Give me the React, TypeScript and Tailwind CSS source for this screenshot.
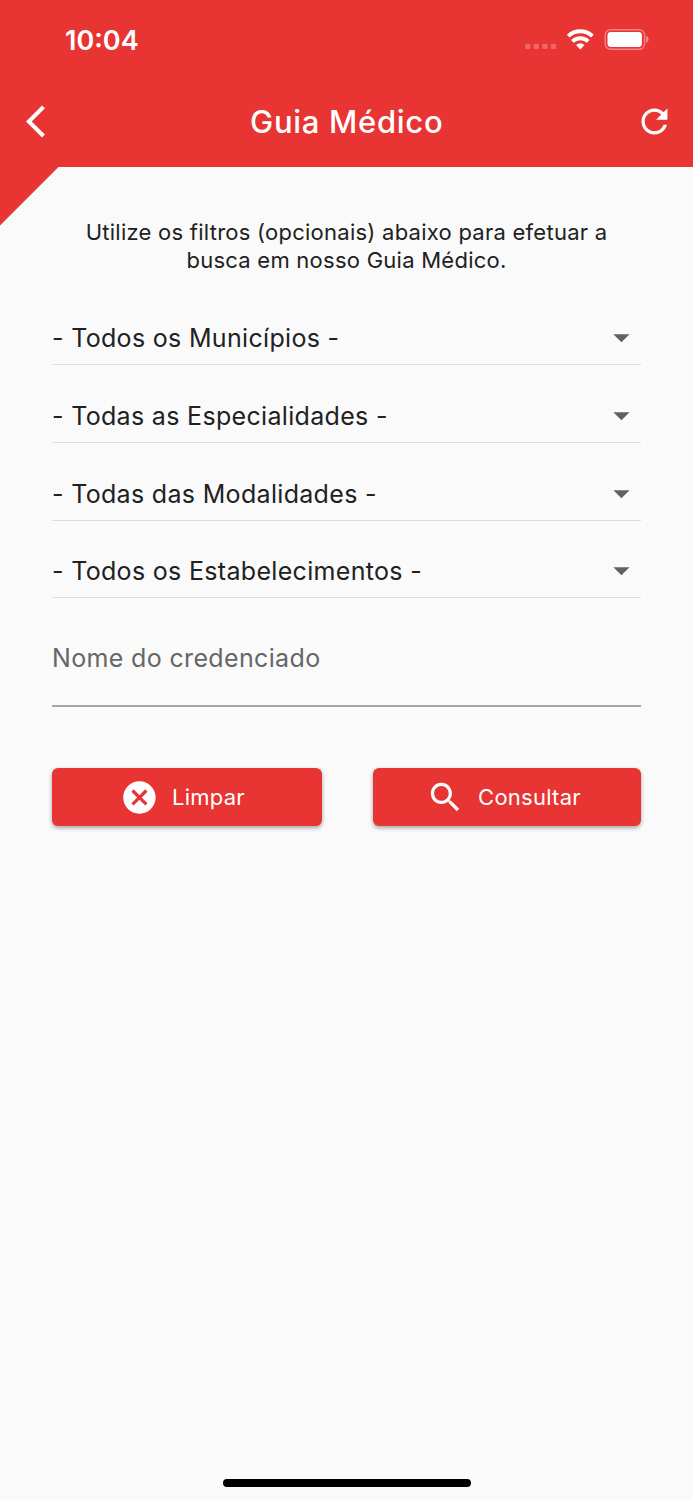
import React from 'react';

interface IconProps {
  d: string;
  className?: string;
}

const ICONS = {
  back: 'M11.67 3.87L9.9 2.1 0 12l9.9 9.9 1.77-1.77L3.54 12z',
  refresh:
    'M17.65 6.35C16.2 4.9 14.21 4 12 4c-4.42 0-7.99 3.58-7.99 8s3.57 8 7.99 8c3.73 0 6.84-2.55 7.73-6h-2.08c-.82 2.33-3.04 4-5.65 4-3.31 0-6-2.69-6-6s2.69-6 6-6c1.66 0 3.14.69 4.22 1.78L13 11h7V4l-2.35 2.35z',
  dropDown: 'M7 10l5 5 5-5z',
  cancel:
    'M12 2C6.47 2 2 6.47 2 12s4.47 10 10 10 10-4.47 10-10S17.53 2 12 2zm5 13.59L15.59 17 12 13.41 8.41 17 7 15.59 10.59 12 7 8.41 8.41 7 12 10.59 15.59 7 17 8.41 13.41 12 17 15.59z',
  search:
    'M15.5 14h-.79l-.28-.27C15.41 12.59 16 11.11 16 9.5 16 5.91 13.09 3 9.5 3S3 5.91 3 9.5 5.91 16 9.5 16c1.61 0 3.09-.59 4.23-1.57l.27.28v.79l5 4.99L20.49 19l-4.99-5zm-6 0C7.01 14 5 11.99 5 9.5S7.01 5 9.5 5 14 7.01 14 9.5 11.99 14 9.5 14z',
};

const Icon: React.FC<IconProps> = ({ d, className = '' }) => (
  <svg viewBox="0 0 24 24" fill="currentColor" className={`h-[38.9px] w-[38.9px] shrink-0 ${className}`}>
    <path d={d} />
  </svg>
);

const FILTERS = [
  '- Todos os Municípios -',
  '- Todas as Especialidades -',
  '- Todas das Modalidades -',
  '- Todos os Estabelecimentos -',
];

const StatusBar: React.FC = () => (
  <div className="flex h-[78px] items-center justify-between pl-[65px] pr-[44px]">
    <span className="pt-[2px] text-[27px] font-semibold leading-none">10:04</span>
    <svg viewBox="0 0 126 24" className="h-6 w-[126px]">
      {/* no signal */}
      <g fill="#fff" opacity="0.25">
        <rect x="2" y="16.7" width="5.4" height="5.4" rx="1.5" />
        <rect x="10.6" y="16.7" width="5.4" height="5.4" rx="1.5" />
        <rect x="19.2" y="16.7" width="5.4" height="5.4" rx="1.5" />
        <rect x="27.8" y="16.7" width="5.4" height="5.4" rx="1.5" />
      </g>
      {/* wifi */}
      <g fill="none" stroke="#fff" strokeWidth="3.9">
        <path d="M45.2 9.1a17.5 17.5 0 0 1 24.2 0" />
        <path d="M49.4 14.4a11.5 11.5 0 0 1 15.8 0" />
      </g>
      <path d="M57.3 22.4l-4.2-4.4a6.2 6.2 0 0 1 8.4 0z" fill="#fff" />
      {/* battery */}
      <rect x="82.2" y="2.7" width="39.4" height="19.6" rx="5.6" fill="none" stroke="#fff" strokeOpacity="0.4" strokeWidth="1.4" />
      <rect x="84.5" y="5.1" width="34.4" height="14.8" rx="3.4" fill="#fff" />
      <path d="M123.2 9.1c1.5.6 2.4 1.8 2.4 3.4s-.9 2.8-2.4 3.4z" fill="#fff" fillOpacity="0.45" />
    </svg>
  </div>
);

const App: React.FC = () => {
  return (
    <div className="flex h-[1500px] w-[693px] flex-col overflow-hidden bg-[#fafafa] font-['Inter','Liberation_Sans',sans-serif] text-[#212121]">
      <header className="relative h-[167px] shrink-0 bg-[#e83432] text-white">
        <StatusBar />
        <div className="flex h-[87px] items-center justify-between pl-[26px] pr-[19.5px]">
          <Icon d={ICONS.back} />
          <h1 className="pr-[6px] text-[31px] font-medium leading-none tracking-[0.7px]">Guia Médico</h1>
          <Icon d={ICONS.refresh} />
        </div>
        {/* corner fold under the bar */}
        <svg viewBox="0 0 59 59" className="absolute left-0 top-full h-[59px] w-[59px]">
          <path d="M0 0h58.5L0 58.5z" fill="#e83432" />
        </svg>
      </header>

      <main className="flex grow flex-col px-[52px] pt-[52px]">
        <p className="text-center text-[22px] leading-[27.5px] tracking-[0.25px]">
          Utilize os filtros (opcionais) abaixo para efetuar a
          <br />
          busca em nosso Guia Médico.
        </p>

        <div className="mt-[13px]">
          {FILTERS.map((label) => (
            <div
              key={label}
              className="flex h-[77.75px] items-end border-b border-[#dedede] pb-[6px] first:h-[78px]"
            >
              <button className="flex w-full items-center justify-between text-left">
                <span className="pt-[2px] text-[25px] leading-[38.9px] tracking-[0.32px]">{label}</span>
                <Icon d={ICONS.dropDown} className="text-[#616161]" />
              </button>
            </div>
          ))}
        </div>

        <div className="h-[109px] border-b-2 border-[#a6a6a6] pt-[40px]">
          <input
            placeholder="Nome do credenciado"
            className="block h-[40px] w-full bg-transparent text-[25px] tracking-[0.35px] outline-none placeholder:text-[#666666]"
          />
        </div>

        <div className="mt-[61px] flex gap-[51px]">
          <button className="flex h-[58px] flex-1 items-center justify-center gap-[13px] rounded-[6px] bg-[#e83432] pr-[9px] text-[22px] tracking-[0.25px] text-white shadow-[0_2px_4px_rgba(0,0,0,0.35)]">
            <Icon d={ICONS.cancel} />
            <span>Limpar</span>
          </button>
          <button className="flex h-[58px] flex-1 items-center justify-center gap-[13px] rounded-[6px] bg-[#e83432] pr-[7px] text-[22px] tracking-[0.25px] text-white shadow-[0_2px_4px_rgba(0,0,0,0.35)]">
            <Icon d={ICONS.search} />
            <span>Consultar</span>
          </button>
        </div>
      </main>

      <div className="mx-auto mb-[13px] h-[8.5px] w-[248px] shrink-0 rounded-full bg-black" />
    </div>
  );
};

export default App;
